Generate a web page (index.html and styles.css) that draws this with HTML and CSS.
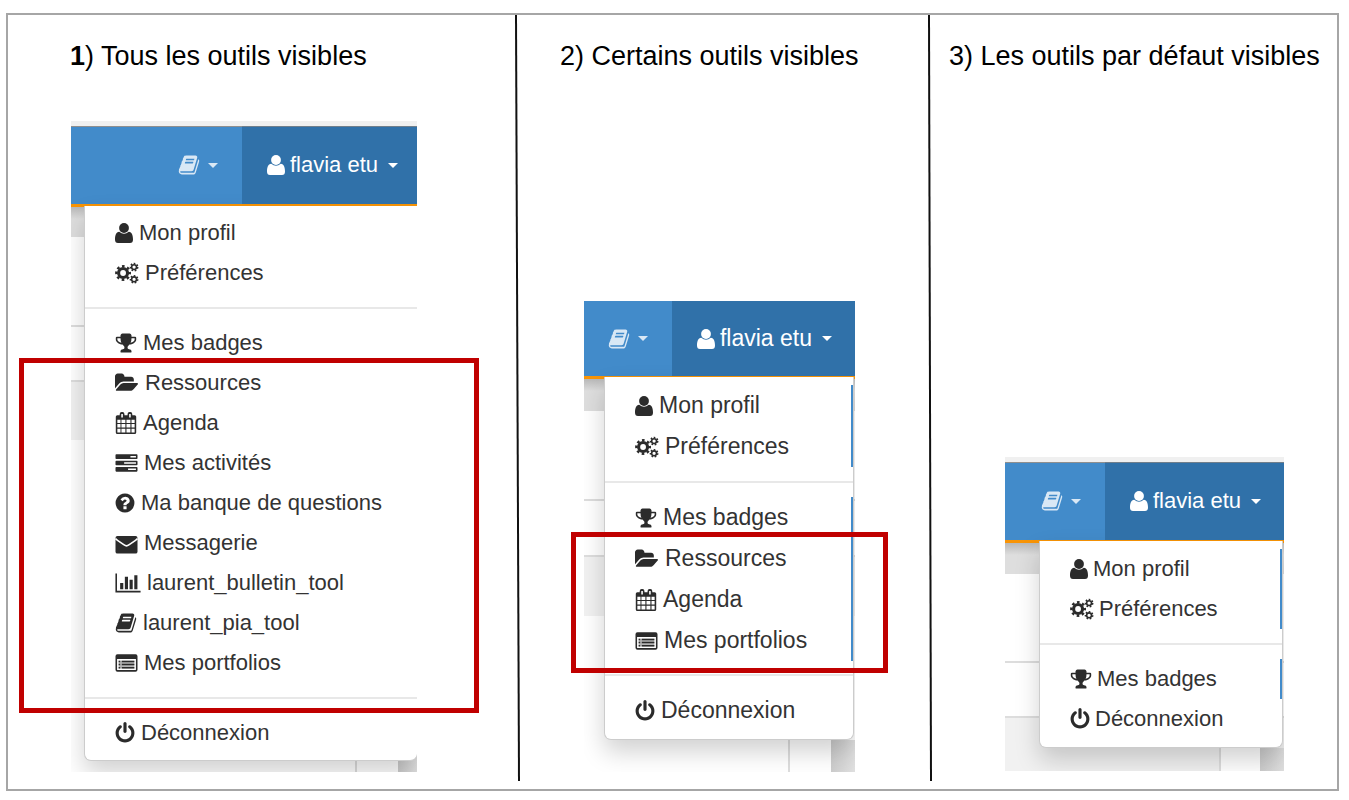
FILE: index.html
```html
<!DOCTYPE html>
<html lang="fr">
<head>
<meta charset="utf-8">
<title>Outils visibles</title>
<link rel="stylesheet" href="styles.css">
</head>
<body>
<svg class="sprite" aria-hidden="true">
  <symbol id="user" viewBox="0 0 18 20"><circle cx="9" cy="5" r="4.900"/><path d="M4.200 8.800Q9 12.800 13.800 8.800C17 9.300 18 12.500 18 16.500Q18 20 15 20H3Q0 20 0 16.500C0 12.500 1 9.300 4.200 8.800z"/></symbol>
  <symbol id="cogs" viewBox="0 0 30 28">
    <g fill="none" stroke="currentColor">
      <circle cx="10" cy="14" r="5.700" stroke-width="4"/>
      <circle cx="10" cy="14" r="8.600" stroke-width="3" stroke-dasharray="3.377 3.377" stroke-dashoffset="1.688"/>
      <circle cx="24" cy="6.500" r="3.100" stroke-width="2"/>
      <circle cx="24" cy="6.500" r="4.700" stroke-width="1.800" stroke-dasharray="2.109 2.109"/>
      <circle cx="24" cy="22" r="3.100" stroke-width="2"/>
      <circle cx="24" cy="22" r="4.700" stroke-width="1.800" stroke-dasharray="2.109 2.109"/>
    </g>
  </symbol>
  <symbol id="trophy" viewBox="64 0 1664 1792"><path d="M522 883q-74-162-74-371h-256v96q0 78 94.500 162t235.500 113zm1078-275v-96h-256q0 209-74 371 141-29 235.500-113t94.500-162zm128-128v128q0 71-41.500 143t-112 130-173 97.500-215.500 44.500q-42 54-95 95-38 34-52.500 72.500t-14.500 89.500q0 54 30.500 91t97.500 37q75 0 133.500 45.500t58.500 114.500v64q0 14-9 23t-23 9h-832q-14 0-23-9t-9-23v-64q0-69 58.500-114.500t133.500-45.500q67 0 97.500-37t30.500-91q0-51-14.500-89.500t-52.500-72.500q-53-41-95-95-113-5-215.500-44.500t-173-97.500-112-130-41.500-143v-128q0-40 28-68t68-28h288v-96q0-66 47-113t113-47h576q66 0 113 47t47 113v96h288q40 0 68 28t28 68z"/></symbol>
  <symbol id="folder" viewBox="0 0 1830 1792"><path d="M1815 952q0 31-31 66l-336 396q-43 51-120.500 86.500t-143.500 35.500h-1088q-34 0-60.500-13t-26.500-43q0-31 31-66l336-396q43-51 120.500-86.500t143.500-35.500h1088q34 0 60.500 13t26.500 43zm-343-344v160h-832q-94 0-197 47.500t-164 119.500l-337 396-5 6v-985q0-92 66-158t158-66h320q92 0 158 66t66 158v32h544q92 0 158 66t66 158z"/></symbol>
  <symbol id="calendar" viewBox="0 0 26 28"><path fill-rule="evenodd" d="M2 4h3V2.500A2.500 2.500 0 0 1 7.500 0h1A2.500 2.500 0 0 1 11 2.500V4h4V2.500A2.500 2.500 0 0 1 17.500 0h1A2.500 2.500 0 0 1 21 2.500V4h3a2 2 0 0 1 2 2v20a2 2 0 0 1-2 2H2a2 2 0 0 1-2-2V6a2 2 0 0 1 2-2zM7 2.500v4.500h2V2.500zM17 2.500v4.500h2V2.500zM2 10v4h4v-4zm5.200 0v4h5v-4zm6.400 0v4h5v-4zm6.400 0v4h4v-4zM2 15.300v4.500h4v-4.500zm5.200 0v4.500h5v-4.500zm6.400 0v4.500h5v-4.500zm6.400 0v4.500h4v-4.500zM2 21.200V26h4v-4.800zm5.200 0V26h5v-4.800zm6.400 0V26h5v-4.800zm6.400 0V26h4v-4.800z"/></symbol>
  <symbol id="tasks" viewBox="0 0 28 28"><path fill-rule="evenodd" d="M1 3h26a1 1 0 0 1 1 1v4a1 1 0 0 1-1 1H1a1 1 0 0 1-1-1V4a1 1 0 0 1 1-1zm18 2v2h7V5zM1 11h26a1 1 0 0 1 1 1v4a1 1 0 0 1-1 1H1a1 1 0 0 1-1-1v-4a1 1 0 0 1 1-1zm10 2v2h15v-2zM1 19h26a1 1 0 0 1 1 1v4a1 1 0 0 1-1 1H1a1 1 0 0 1-1-1v-4a1 1 0 0 1 1-1zm15 2v2h10v-2z"/></symbol>
  <symbol id="question" viewBox="128 0 1536 1792"><path d="M1024 1376v-192q0-14-9-23t-23-9h-192q-14 0-23 9t-9 23v192q0 14 9 23t23 9h192q14 0 23-9t9-23zm256-672q0-88-55.500-163t-138.500-116-170-41q-243 0-371 213-15 24 8 42l132 100q7 6 19 6 16 0 25-12 53-68 86-92 34-24 86-24 48 0 85.500 26t37.500 59q0 38-20 61t-68 45q-63 28-115.500 86.500t-52.500 125.500v36q0 14 9 23t23 9h192q14 0 23-9t9-23q0-19 21.500-49.500t54.500-49.500q32-18 49-28.500t46-35 44.500-48 28-60.500 12.500-81zm384 192q0 209-103 385.500t-279.500 279.500-385.500 103-385.500-103-279.500-279.500-103-385.500 103-385.500 279.500-279.500 385.500-103 385.500 103 279.500 279.500 103 385.500z"/></symbol>
  <symbol id="envelope" viewBox="0 0 28 28"><path d="M2.500 5h23A2.500 2.500 0 0 1 28 7.500v17.500a2.500 2.500 0 0 1-2.500 2.500h-23A2.500 2.500 0 0 1 0 25V7.500A2.500 2.500 0 0 1 2.500 5z"/><path d="M0 8.300q1.200 1.400 3 2.600l7.500 5.200q2.200 1.600 3.500 1.600t3.500-1.600l7.500-5.200q1.800-1.200 3-2.600" fill="none" stroke="#fff" stroke-width="2"/></symbol>
  <symbol id="chart" viewBox="0 0 2048 1792"><path d="M640 896v512h-256v-512h256zm384-512v1024h-256v-1024h256zm1024 1152v128h-2048v-1536h128v1408h1920zm-640-896v768h-256v-768h256zm384-384v1152h-256v-1152h256z"/></symbol>
  <symbol id="book" viewBox="64 0 1664 1792"><path d="M1703 478q40 57 18 129l-275 906q-19 64-76.500 107.500t-122.500 43.500h-923q-77 0-148.500-53.500t-99.500-131.500q-24-67-2-127 0-4 3-27t4-37q1-8-3-21.500t-3-19.500q2-11 8-21t16.500-23.500 16.500-23.500q23-38 45-91.500t30-91.500q3-10 .5-30t-.5-28q3-11 17-28t17-23q21-36 42-92t25-90q1-9-2.500-32t.5-28q4-13 22-30.500t22-22.500q19-26 42.500-84.500t27.500-96.500q1-8-3-25.500t-2-26.500q2-8 9-18t18-23 17-21q8-12 16.500-30.500t15-35 16-36 19.500-32 26.500-23.500 36-11.500 47.500 5.500l-1 3q38-9 51-9h761q74 0 114 56t18 130l-274 906q-36 119-71.500 153.500t-128.500 34.500h-869q-27 0-38 15-11 16-1 43 24 70 144 70h923q29 0 56-15.500t35-41.500l300-987q7-22 5-57 38 15 59 43zm-1064 2q-4 13 2 22.500t20 9.500h608q13 0 25.500-9.500t16.500-22.500l21-64q4-13-2-22.500t-20-9.500h-608q-13 0-25.500 9.500t-16.500 22.500zm-83 256q-4 13 2 22.500t20 9.500h608q13 0 25.500-9.500t16.500-22.500l21-64q4-13-2-22.500t-20-9.500h-608q-13 0-25.500 9.500t-16.500 22.500z"/></symbol>
  <symbol id="list" viewBox="0 0 28 28"><path fill-rule="evenodd" d="M2.500 3h23A2.500 2.500 0 0 1 28 5.500v17a2.500 2.500 0 0 1-2.500 2.500h-23A2.500 2.500 0 0 1 0 22.500v-17A2.500 2.500 0 0 1 2.500 3zM2 9v13.500q0 .5.500.5h23q.5 0 .5-.5V9z"/><path d="M4 11h2v2H4zM4 15h2v2H4zM4 19h2v2H4zM8 11h16v2H8zM8 15h16v2H8zM8 19h16v2H8z"/><path d="M4 11h20v10H4z" opacity=".35"/></symbol>
  <symbol id="power" viewBox="128 0 1536 1792"><path d="M1664 896q0 156-61 298t-164 245-245 164-298 61-298-61-245-164-164-245-61-298q0-182 80.500-343t226.500-270q43-32 95.500-25t83.500 50q32 42 24.500 94.500t-49.500 84.500q-98 74-151.500 181t-53.500 228q0 104 40.500 198.500t109.500 163.500 163.500 109.500 198.500 40.500 198.500-40.500 163.500-109.500 109.500-163.500 40.500-198.500q0-121-53.500-228t-151.500-181q-42-32-49.500-84.500t24.500-94.500q31-43 84-50t95 25q146 109 226.500 270t80.500 343zm-640-768v640q0 52-38 90t-90 38-90-38-38-90v-640q0-52 38-90t90-38 90 38 38 90z"/></symbol>
</svg>

<main class="board">
  <section class="case case-all">
    <h2><b>1</b>) Tous les outils visibles</h2>
    <div class="shot">
      <div class="window">
        <nav class="bar strip">
          <button class="tools" aria-label="Outils"><svg class="i w22"><use href="#book"/></svg><span class="caret"></span></button>
          <button class="account"><svg class="i w18"><use href="#user"/></svg><span>flavia etu</span><span class="caret"></span></button>
        </nav>
        <div class="page">
          <div class="menu">
            <ul>
              <li><a href="#"><svg class="i w18"><use href="#user"/></svg>Mon profil</a></li>
              <li><a href="#"><svg class="i w24"><use href="#cogs"/></svg>Préférences</a></li>
            </ul>
            <hr>
            <ul>
              <li><a href="#"><svg class="i w22"><use href="#trophy"/></svg>Mes badges</a></li>
              <li><a href="#"><svg class="i w24"><use href="#folder"/></svg>Ressources</a></li>
              <li><a href="#"><svg class="i w22"><use href="#calendar"/></svg>Agenda</a></li>
              <li><a href="#"><svg class="i w23"><use href="#tasks"/></svg>Mes activités</a></li>
              <li><a href="#"><svg class="i w20"><use href="#question"/></svg>Ma banque de questions</a></li>
              <li><a href="#"><svg class="i w23"><use href="#envelope"/></svg>Messagerie</a></li>
              <li><a href="#"><svg class="i w26"><use href="#chart"/></svg>laurent_bulletin_tool</a></li>
              <li><a href="#"><svg class="i w22"><use href="#book"/></svg>laurent_pia_tool</a></li>
              <li><a href="#"><svg class="i w23"><use href="#list"/></svg>Mes portfolios</a></li>
            </ul>
            <hr>
            <ul>
              <li><a href="#"><svg class="i w20"><use href="#power"/></svg>Déconnexion</a></li>
            </ul>
          </div>
        </div>
      </div>
      <div class="highlight"></div>
    </div>
  </section>

  <svg class="divider" viewBox="0 0 5 100" preserveAspectRatio="none"><path d="M1 0 4 100" vector-effect="non-scaling-stroke"/></svg>

  <section class="case case-some">
    <h2>2) Certains outils visibles</h2>
    <div class="shot">
      <div class="window">
        <nav class="bar">
          <button class="tools" aria-label="Outils"><svg class="i w22"><use href="#book"/></svg><span class="caret"></span></button>
          <button class="account"><svg class="i w18"><use href="#user"/></svg><span>flavia etu</span><span class="caret"></span></button>
        </nav>
        <div class="page">
          <div class="menu">
            <ul class="edge">
              <li><a href="#"><svg class="i w18"><use href="#user"/></svg>Mon profil</a></li>
              <li><a href="#"><svg class="i w24"><use href="#cogs"/></svg>Préférences</a></li>
            </ul>
            <hr>
            <ul class="edge">
              <li><a href="#"><svg class="i w22"><use href="#trophy"/></svg>Mes badges</a></li>
              <li><a href="#"><svg class="i w24"><use href="#folder"/></svg>Ressources</a></li>
              <li><a href="#"><svg class="i w22"><use href="#calendar"/></svg>Agenda</a></li>
              <li><a href="#"><svg class="i w23"><use href="#list"/></svg>Mes portfolios</a></li>
            </ul>
            <hr>
            <ul>
              <li><a href="#"><svg class="i w20"><use href="#power"/></svg>Déconnexion</a></li>
            </ul>
          </div>
        </div>
      </div>
      <div class="highlight"></div>
    </div>
  </section>

  <svg class="divider" viewBox="0 0 5 100" preserveAspectRatio="none"><path d="M1 0 3 100" vector-effect="non-scaling-stroke"/></svg>

  <section class="case case-default">
    <h2>3) Les outils par défaut visibles</h2>
    <div class="shot">
      <div class="window">
        <nav class="bar strip">
          <button class="tools" aria-label="Outils"><svg class="i w22"><use href="#book"/></svg><span class="caret"></span></button>
          <button class="account"><svg class="i w18"><use href="#user"/></svg><span>flavia etu</span><span class="caret"></span></button>
        </nav>
        <div class="page">
          <div class="menu">
            <ul class="edge">
              <li><a href="#"><svg class="i w18"><use href="#user"/></svg>Mon profil</a></li>
              <li><a href="#"><svg class="i w24"><use href="#cogs"/></svg>Préférences</a></li>
            </ul>
            <hr>
            <ul class="edge">
              <li><a href="#"><svg class="i w22"><use href="#trophy"/></svg>Mes badges</a></li>
            </ul>
            <ul>
              <li><a href="#"><svg class="i w20"><use href="#power"/></svg>Déconnexion</a></li>
            </ul>
          </div>
        </div>
      </div>
    </div>
  </section>
</main>
</body>
</html>
```

FILE: styles.css
```css
* { box-sizing: border-box; }

body {
  margin: 13px 10px 8px 6px;
  background: #fff;
  color: #000;
  font-family: "Liberation Sans", Arial, sans-serif;
}

.sprite { display: none; }

.board {
  display: grid;
  grid-template-columns: 507fr 5px 408fr 5px 404fr;
  border: 2px solid #a6a6a6;
}

.divider {
  width: 5px;
  height: calc(100% - 8px);
  fill: none;
  stroke: #111;
  stroke-width: 2px;
}

/* Columns */
.case {
  display: flex;
  flex-direction: column;
  justify-content: space-between;
  min-width: 0;
  padding: 24px 0 17px;
}

h2 {
  margin: 0;
  font-size: 27px;
  line-height: 34px;
  font-weight: 400;
  white-space: nowrap;
}

.case-all h2 { padding-left: 62px; }
.case-some h2 { padding-left: 40px; }
.case-default h2 { padding-left: 16px; }

.shot { position: relative; }
.case-all .shot { width: 346px; margin: 48px 0 0 63px; }
.case-some .shot { width: 271px; margin: 48px 0 0 64px; }
.case-default .shot { width: 279px; margin: 48px 0 1px 72px; }

.window {
  overflow: hidden;
  font-size: 22px;
}

.case-some .window { font-size: 23px; }

.highlight {
  position: absolute;
  border: 5px solid #c00000;
}

.case-all .highlight { inset: 237px -62px 59px -52px; }
.case-some .highlight { inset: 231px -33px 99px -13px; }

/* Navigation bar */
.bar {
  display: flex;
  justify-content: flex-end;
  height: 78px;
  border-bottom: 3px solid #f89406;
  background: #428bca;
}

.bar.strip {
  height: 86px;
  border-top: 5px solid #f0f0f0;
  box-shadow: inset 0 1px #8f8f8f;
}

.bar button {
  display: flex;
  align-items: center;
  border: 0;
  background: none;
  color: #fff;
  font: inherit;
}

.bar .tools {
  gap: 8px;
  padding: 0 24px 0 0;
  color: #d9e8f5;
}

.bar .account {
  gap: 5px;
  padding: 0 19px 0 25px;
  background: #3071a9;
}

.strip .account { box-shadow: inset 0 1px #707f8c; }
.case-some .account, .case-default .account { padding-right: 23px; }

.caret {
  width: 10px;
  border: 5px solid transparent;
  border-top-color: currentColor;
  border-bottom: 0;
}

.account .caret { margin-left: 5px; }

/* Page behind the menu */
.page {
  --header: 30px;
  --rule: 118px;
  --panel: 173px;
  --panel-end: 233px;
  display: flow-root;
  padding-bottom: 11px;
  background:
    linear-gradient(90deg, #ccc, #e0e0e0) right 0 bottom 0 / 19px 40px no-repeat,
    linear-gradient(#ddd, #ddd) right 60px bottom 0 / 2px 40px no-repeat,
    linear-gradient(
      #b8b8b8, #dedede 12px, #dedede var(--header), #fff var(--header),
      #fff var(--rule), #ddd var(--rule), #ddd calc(var(--rule) + 2px), #fff calc(var(--rule) + 2px),
      #fff var(--panel), #ddd var(--panel), #ddd calc(var(--panel) + 2px), #f1f1f1 calc(var(--panel) + 2px),
      #f1f1f1 var(--panel-end), #fff var(--panel-end));
}

.case-some .page {
  --header: 32px;
  --rule: 120px;
  --panel: 176px;
  --panel-end: 237px;
  padding-bottom: 32px;
  background-size: 24px 32px, 2px 32px, auto;
  background-position: right 0 bottom 0, right 65px bottom 0, 0 0;
}

.case-default .page {
  --header: 31px;
  padding-bottom: 23px;
  background:
    linear-gradient(90deg, #ccc, #e0e0e0) right 0 bottom 0 / 24px 23px no-repeat,
    linear-gradient(90deg, #ddd 2px, #fff 2px) right 24px bottom 0 / 41px 23px no-repeat,
    linear-gradient(
      #b8b8b8, #dedede 12px, #dedede var(--header), #fff var(--header),
      #fff var(--rule), #ddd var(--rule), #ddd calc(var(--rule) + 2px), #fff calc(var(--rule) + 2px),
      #fff var(--panel), #ddd var(--panel), #ddd calc(var(--panel) + 2px), #f1f1f1 calc(var(--panel) + 2px));
}

.menu {
  margin: -1px 0 0 13px;
  padding: 7px 0;
  border: 1px solid #ccc;
  border-top: 0;
  border-radius: 0 0 7px 7px;
  background: #fff;
  box-shadow: 0 12px 24px rgba(0, 0, 0, .18);
  color: #333;
}

.case-all .menu { border-right: 0; }

.case-some .menu {
  margin: -2px 1px 0 20px;
  padding: 8px 0;
}

.case-default .menu {
  margin: -2px 1px 0 34px;
  padding: 8px 0;
}

.menu ul {
  margin: 0;
  padding: 0 0 0 30px;
  list-style: none;
}

.menu .edge { border-right: 2px solid #428bca; }

.menu hr {
  height: 2px;
  margin: 14px 0;
  border: 0;
  background: #e8e8e8;
}

.case-some .edge + hr:nth-of-type(2) { margin-top: 13px; }

.menu a {
  display: flex;
  align-items: center;
  gap: 6px;
  height: 40px;
  color: inherit;
  text-decoration: none;
  white-space: nowrap;
}

.case-some a { height: 41px; }
.case-default a { gap: 5px; }

/* Icons */
.i {
  flex: none;
  height: 22px;
  fill: currentColor;
}

.menu .i { color: #2b2b2b; }
.w18 { width: 18px; height: 20px; }
.w20 { width: 20px; }
.w22 { width: 22px; }
.w23 { width: 23px; }
.w24 { width: 24px; }
.w26 { width: 26px; }
```
